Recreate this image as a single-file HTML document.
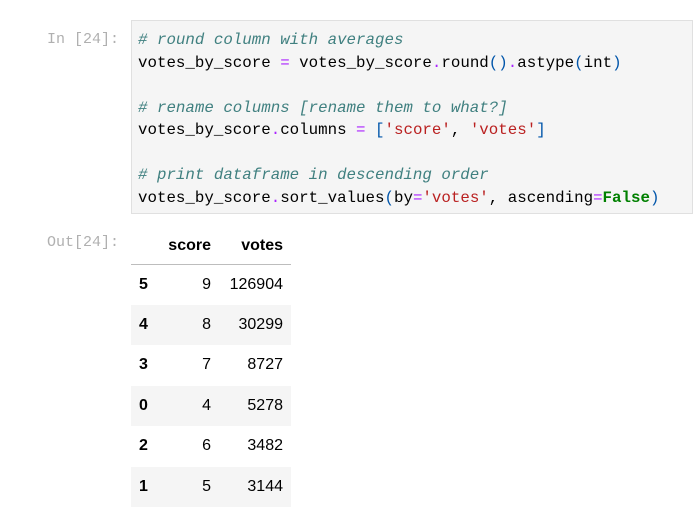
<!DOCTYPE html>
<html><head><style>
body{margin:0;background:#fff;width:693px;height:524px;overflow:hidden;position:relative;font-family:"Liberation Sans",sans-serif}
.p{position:absolute;font-family:"Liberation Mono",monospace;font-size:15px;color:#b0b0b0}
.code{position:absolute;left:131px;top:20px;width:562px;height:194px;background:#f5f5f5;border:1px solid #e0e0e0;box-sizing:border-box}
pre{margin:0;position:absolute;left:6px;top:8px;font-family:"Liberation Mono",monospace;font-size:15.8px;line-height:22.5px;color:#000}
.c{color:#408080;font-style:italic}.o{color:#aa22ff}.s{color:#ba2121}.k{color:#008000;font-weight:bold}.b{color:#0055aa}
table{position:absolute;left:131px;top:229px;border-collapse:collapse;font-size:16px;color:#000;table-layout:fixed;width:160px}
th,td{height:40.5px;padding:0;text-align:right;box-sizing:border-box}
thead th{height:35px;border-bottom:1px solid #bdbdbd;font-weight:bold}
tbody th{text-align:left;padding-left:8px}
tr.g{background:#f5f5f5}
</style></head><body>
<div class="p" style="left:47px;top:31px">In [24]:</div>
<div class="code"><pre><span class="c"># round column with averages</span>
votes_by_score <span class="o">=</span> votes_by_score<span class="o">.</span>round<span class="b">()</span><span class="o">.</span>astype<span class="b">(</span>int<span class="b">)</span>

<span class="c"># rename columns [rename them to what?]</span>
votes_by_score<span class="o">.</span>columns <span class="o">=</span> <span class="b">[</span><span class="s">'score'</span>, <span class="s">'votes'</span><span class="b">]</span>

<span class="c"># print dataframe in descending order</span>
votes_by_score<span class="o">.</span>sort_values<span class="b">(</span>by<span class="o">=</span><span class="s">'votes'</span>, ascending<span class="o">=</span><span class="k">False</span><span class="b">)</span></pre></div>
<div class="p" style="left:47px;top:234px">Out[24]:</div>
<table>
<colgroup><col style="width:30px"><col style="width:50px"><col style="width:80px"></colgroup>
<thead><tr><th></th><th>score</th><th style="padding-right:8px">votes</th></tr></thead>
<tbody>
<tr><th>5</th><td>9</td><td style="padding-right:8px">126904</td></tr>
<tr class="g"><th>4</th><td>8</td><td style="padding-right:8px">30299</td></tr>
<tr><th>3</th><td>7</td><td style="padding-right:8px">8727</td></tr>
<tr class="g"><th>0</th><td>4</td><td style="padding-right:8px">5278</td></tr>
<tr><th>2</th><td>6</td><td style="padding-right:8px">3482</td></tr>
<tr class="g"><th>1</th><td>5</td><td style="padding-right:8px">3144</td></tr>
</tbody></table>
</body></html>
